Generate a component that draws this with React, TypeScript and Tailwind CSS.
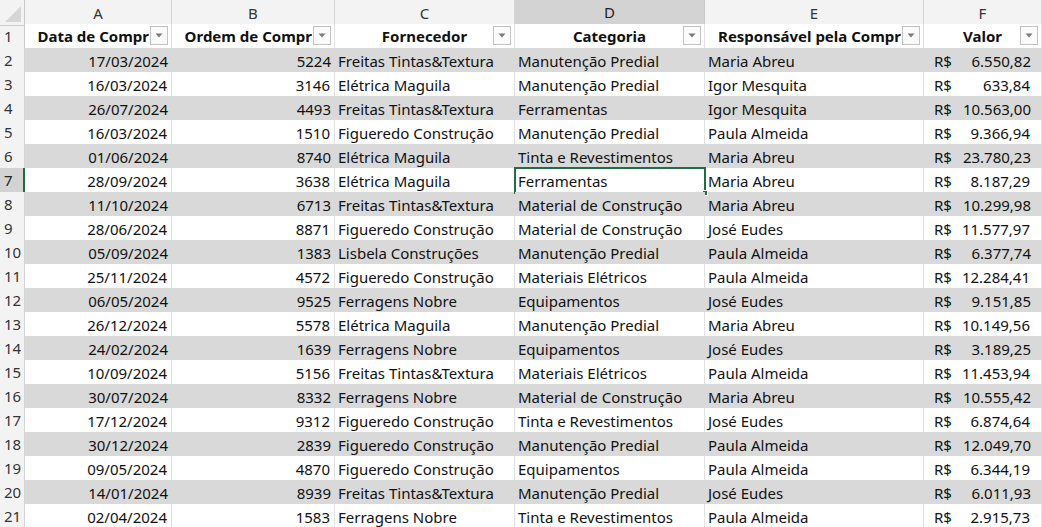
import React from "react";

const rows: [string, string, string, string, string, string][] = [
  ["17/03/2024", "5224", "Freitas Tintas&Textura", "Manutenção Predial", "Maria Abreu", "6.550,82"],
  ["16/03/2024", "3146", "Elétrica Maguila", "Manutenção Predial", "Igor Mesquita", "633,84"],
  ["26/07/2024", "4493", "Freitas Tintas&Textura", "Ferramentas", "Igor Mesquita", "10.563,00"],
  ["16/03/2024", "1510", "Figueredo Construção", "Manutenção Predial", "Paula Almeida", "9.366,94"],
  ["01/06/2024", "8740", "Elétrica Maguila", "Tinta e Revestimentos", "Maria Abreu", "23.780,23"],
  ["28/09/2024", "3638", "Elétrica Maguila", "Ferramentas", "Maria Abreu", "8.187,29"],
  ["11/10/2024", "6713", "Freitas Tintas&Textura", "Material de Construção", "Maria Abreu", "10.299,98"],
  ["28/06/2024", "8871", "Figueredo Construção", "Material de Construção", "José Eudes", "11.577,97"],
  ["05/09/2024", "1383", "Lisbela Construções", "Manutenção Predial", "Paula Almeida", "6.377,74"],
  ["25/11/2024", "4572", "Figueredo Construção", "Materiais Elétricos", "Paula Almeida", "12.284,41"],
  ["06/05/2024", "9525", "Ferragens Nobre", "Equipamentos", "José Eudes", "9.151,85"],
  ["26/12/2024", "5578", "Elétrica Maguila", "Manutenção Predial", "Maria Abreu", "10.149,56"],
  ["24/02/2024", "1639", "Ferragens Nobre", "Equipamentos", "José Eudes", "3.189,25"],
  ["10/09/2024", "5156", "Freitas Tintas&Textura", "Materiais Elétricos", "Paula Almeida", "11.453,94"],
  ["30/07/2024", "8332", "Ferragens Nobre", "Material de Construção", "Maria Abreu", "10.555,42"],
  ["17/12/2024", "9312", "Figueredo Construção", "Tinta e Revestimentos", "José Eudes", "6.874,64"],
  ["30/12/2024", "2839", "Figueredo Construção", "Manutenção Predial", "Paula Almeida", "12.049,70"],
  ["09/05/2024", "4870", "Figueredo Construção", "Equipamentos", "Paula Almeida", "6.344,19"],
  ["14/01/2024", "8939", "Freitas Tintas&Textura", "Manutenção Predial", "José Eudes", "6.011,93"],
  ["02/04/2024", "1583", "Ferragens Nobre", "Tinta e Revestimentos", "Paula Almeida", "2.915,73"],
];

const grid = "grid grid-cols-[25px_147px_163px_180px_190px_219px_118px]";

function Drop() {
  return (
    <div className="absolute right-[3px] top-[2px] w-[18px] h-[19px] border border-[#c3c3c3] bg-[#fbfbfb] flex items-center justify-center">
      <svg width="8" height="5" viewBox="0 0 8 5">
        <path d="M0.5 0.5 L7.5 0.5 L4 4.5 Z" fill="#7a7a7a" />
      </svg>
    </div>
  );
}

function Head({ text, clip }: { text: string; clip?: boolean }) {
  return (
    <div className="relative h-[24px] border-r border-[#e2e2e2] bg-white overflow-hidden">
      {clip ? (
        <div className="absolute left-0 right-[22px] top-0 bottom-0 flex items-center justify-end overflow-hidden whitespace-nowrap font-bold pt-[1px]">
          {text}
        </div>
      ) : (
        <div className="h-full flex items-center justify-center whitespace-nowrap font-bold pt-[1px]">{text}</div>
      )}
      <Drop />
    </div>
  );
}

export default function App() {
  const letters = ["A", "B", "C", "D", "E", "F"];
  return (
    <div
      className="w-[1042px] h-[527px] overflow-hidden bg-white text-[15px] text-[#111]"
      style={{ fontFamily: '"Noto Sans", "Open Sans", sans-serif' }}
    >
      {/* column letters */}
      <div className={grid + " h-[24px]"}>
        <div className="relative bg-[#f3f3f3] border-r border-b border-[#c9c9c9]">
          <svg className="absolute right-[3px] bottom-[3px]" width="16" height="16" viewBox="0 0 16 16">
            <path d="M16 0 L16 16 L0 16 Z" fill="#d6d6d6" />
          </svg>
        </div>
        {letters.map((l) => (
          <div
            key={l}
            className={
              l === "D"
                ? "flex items-center justify-center bg-[#d3d3d3] border-r border-[#c9c9c9] border-b-2 border-b-[#1f6e43] text-[#222] pt-[1px]"
                : "flex items-center justify-center bg-[#f3f3f3] border-r border-b border-[#d4d4d4] text-[#333] pt-[1px]"
            }
          >
            {l}
          </div>
        ))}
      </div>
      {/* header row */}
      <div className={grid + " h-[24px] border-b border-[#222]"}>
        <div className="flex items-center pl-[4px] bg-[#f3f3f3] border-r border-[#c9c9c9] text-[#333] pt-[1px]">1</div>
        <Head text="Data de Compr" clip />
        <Head text="Ordem de Compr" clip />
        <Head text="Fornecedor" />
        <Head text="Categoria" />
        <Head text="Responsável pela Compr" clip />
        <Head text="Valor" />
      </div>
      {rows.map((r, i) => {
        const n = i + 2;
        const gray = n % 2 === 0;
        const sel = n === 7;
        const cell = gray ? "bg-[#d9d9d9]" : "bg-white border-r border-[#e2e2e2]";
        return (
          <div key={n} className={grid + " h-[24px]"}>
            <div
              className={
                sel
                  ? "flex items-center pl-[4px] bg-[#d3d3d3] border-r-2 border-[#1f6e43] border-b border-b-[#d4d4d4] text-[#222] pt-[1px]"
                  : "flex items-center pl-[4px] bg-[#f3f3f3] border-r border-b border-[#d4d4d4] text-[#333] pt-[1px]"
              }
            >
              {n}
            </div>
            <div className={cell + " flex items-center justify-end pr-[4px] pt-[1px]"}>{r[0]}</div>
            <div className={cell + " flex items-center justify-end pr-[4px] pt-[1px]"}>{r[1]}</div>
            <div className={cell + " flex items-center pl-[3px] whitespace-nowrap pt-[1px]"}>{r[2]}</div>
            <div className={cell + " relative flex items-center pl-[3px] whitespace-nowrap pt-[1px]"}>
              {r[3]}
              {sel && (
                <>
                  <div className="absolute -left-[1px] -top-[1px] -right-[2px] -bottom-[1px] border-2 border-[#1f6e43]" />
                  <div className="absolute -right-[4px] -bottom-[3px] w-[6px] h-[6px] bg-[#1f6e43] border border-white" />
                </>
              )}
            </div>
            <div className={cell + " flex items-center pl-[3px] whitespace-nowrap pt-[1px]"}>{r[4]}</div>
            <div className={cell + " flex items-center justify-between pl-[10px] pr-[11px] pt-[1px]"}>
              <span>R$</span>
              <span>{r[5]}</span>
            </div>
          </div>
        );
      })}
    </div>
  );
}
